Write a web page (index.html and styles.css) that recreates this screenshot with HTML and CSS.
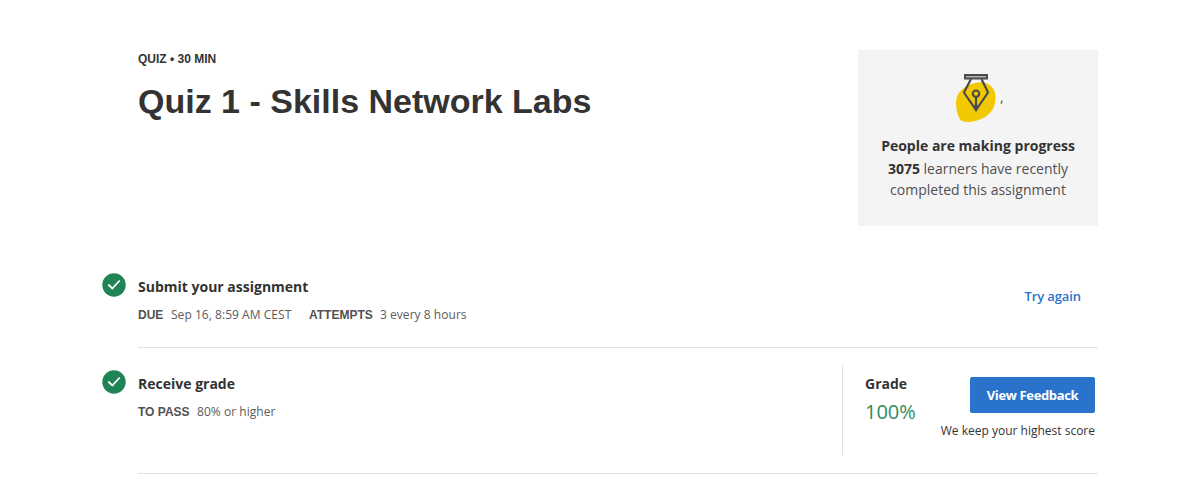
FILE: index.html
```html
<!DOCTYPE html>
<html lang="en">
<head>
<meta charset="utf-8">
<title>Quiz 1 - Skills Network Labs</title>
<link rel="stylesheet" href="styles.css">
</head>
<body>
<main class="page">
  <header class="header">
    <div class="heading">
      <p class="kind">QUIZ • 30 MIN</p>
      <h1 class="title">Quiz 1 - Skills Network Labs</h1>
    </div>
    <aside class="progress">
      <div class="art">
        <svg class="pen" width="42" height="50" viewBox="0 0 42 50">
          <path d="M1 31C.8 20 9 14 20 11C31 8 40 14 40.500 24C41 36 35 43 26 47C18 50.500 9 51 5.500 48C2.500 44 1.300 38 1 31Z" fill="#f2c800"/>
          <g fill="none" stroke="#4b4b4b" stroke-width="2.200">
            <path d="M10 3H32V6.500H10Z" fill="#b0b0b0" stroke-width="2"/>
            <path d="M16 7L9 20.500L21 38L33 20.500L26.500 7"/>
            <circle cx="21" cy="21.700" r="3.200"/>
            <path d="M21 25V37"/>
          </g>
          <path d="M18 33H24L21 39.500Z" fill="#4b4b4b"/>
        </svg>
        <span class="comma">,</span>
      </div>
      <p class="progress-title">People are making progress</p>
      <p class="progress-text"><b class="count">3075</b> learners have recently<br><span class="second">completed this assignment</span></p>
    </aside>
  </header>

  <section class="row submit">
    <svg class="check" width="24" height="24" viewBox="0 0 24 24"><circle cx="12" cy="12" r="11.700" fill="#1f8354"/><path d="M6.300 11.500L10.300 15.500L17.700 7.500" fill="none" stroke="#fff" stroke-width="1.800"/></svg>
    <div class="info">
      <h2 class="name submit-name">Submit your assignment</h2>
      <p class="meta"><span class="label due">DUE</span><span class="value date">Sep 16, 8:59 AM CEST</span><span class="label attempts">ATTEMPTS</span><span class="value">3 every 8 hours</span></p>
    </div>
    <a class="again">Try again</a>
  </section>

  <section class="row receive">
    <svg class="check" width="24" height="24" viewBox="0 0 24 24"><circle cx="12" cy="12" r="11.700" fill="#1f8354"/><path d="M6.300 11.500L10.300 15.500L17.700 7.500" fill="none" stroke="#fff" stroke-width="1.800"/></svg>
    <div class="info">
      <h2 class="name">Receive grade</h2>
      <p class="meta"><span class="label pass">TO PASS</span><span class="value">80% or higher</span></p>
    </div>
    <div class="result">
      <div class="grade">
        <h2 class="name">Grade</h2>
        <p class="score">100%</p>
      </div>
      <div class="feedback">
        <button class="button">View Feedback</button>
        <p class="note">We keep your highest score</p>
      </div>
    </div>
  </section>
</main>
</body>
</html>
```
FILE: styles.css
```css
* { box-sizing: border-box; }
body { margin: 0; background: #fff; color: #333; font-family: "Open Sans", sans-serif; font-size: 14px; }
h1, h2, p { margin: 0; }
.page { width: 960px; margin-left: 138px; padding-top: 50px; }
.header { display: flex; justify-content: space-between; height: 176px; }
.kind { font: bold 12px/18px "Liberation Sans", Arial, sans-serif; }
.title { font: bold 34px/44px "Liberation Sans", Arial, sans-serif; margin-top: 11px; white-space: nowrap; }
.progress { width: 240px; height: 176px; background: #f4f4f4; text-align: center; padding-top: 22px; }
.art { display: flex; height: 50px; padding-left: 97px; }
.comma { margin-left: 3px; line-height: 50px; font-size: 14px; color: #555; }
.progress-title { font-weight: 700; line-height: 20px; margin-top: 14px; white-space: nowrap; }
.progress-text { font-weight: 400; line-height: 21px; margin-top: 2px; white-space: nowrap; color: #505050; }
.count { font-weight: 700; color: #333; }
.row { display: flex; border-bottom: 1px solid #e1e1e1; }
.submit { height: 75px; margin-top: 47px; }
.receive { height: 126px; padding-top: 17px; }
.check { flex: none; margin-left: -36px; margin-right: 12px; }
.receive .check { margin-top: 5px; }
.info { flex: 1; padding-top: 4px; }
.receive .info { padding-top: 9px; }
.name { font-size: 14px; font-weight: 700; line-height: 20px; white-space: nowrap; }
.meta { display: flex; margin-top: 8px; font-size: 12px; line-height: 20px; color: #525252; white-space: nowrap; }
.label { font-weight: 700; font-family: "Liberation Sans", Arial, sans-serif; }
.value { font-weight: 400; letter-spacing: .04px; color: #5c5c5c; }
.due { width: 33px; }
.date { width: 138px; }
.attempts { width: 71px; }
.pass { width: 59px; }
.again { color: #2a73cc; font-size: 13px; font-weight: 600; line-height: 20px; letter-spacing: -.1px; padding: 13px 17px 0 0; }
.result { display: flex; justify-content: space-between; width: 256px; height: 90px; border-left: 1px solid #e1e1e1; padding-left: 22px; padding-right: 3px; }
.grade { padding-top: 9px; }
.score { font-size: 20px; font-weight: 400; line-height: 28px; margin-top: 4px; color: #2f8c61; }
.feedback { display: flex; flex-direction: column; align-items: flex-end; padding-top: 12px; }
.button { width: 125px; height: 36px; padding: 0; border: 0; border-radius: 2px; background: #2a73cc; color: #fff; font: 700 13px/36px "Open Sans", sans-serif; letter-spacing: -.35px; }
.note { font-size: 12px; line-height: 20px; margin-top: 8px; white-space: nowrap; }
```
